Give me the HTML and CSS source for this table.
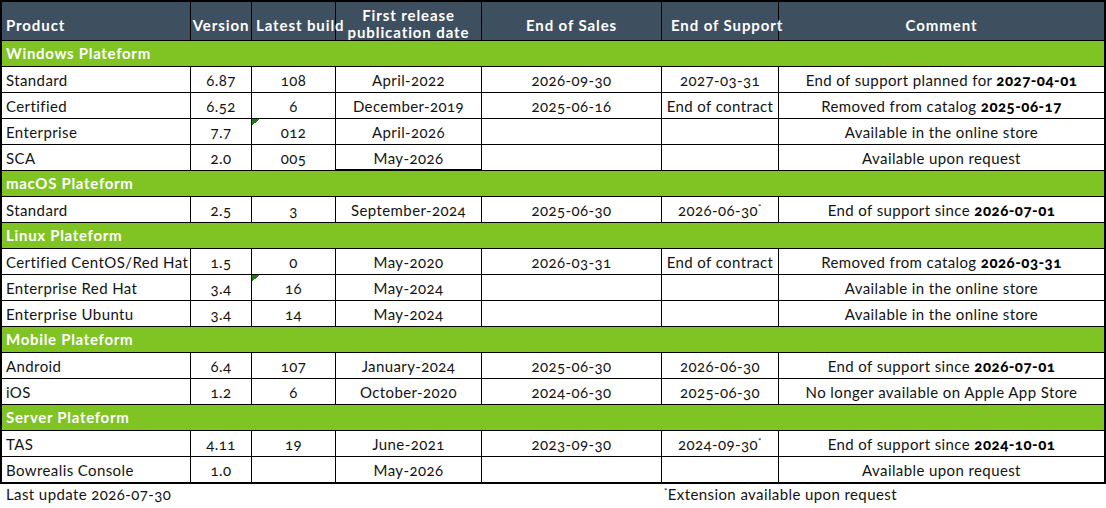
FILE: index.html
```html
<!DOCTYPE html>
<html lang="en">
<head>
<meta charset="utf-8">
<title>Product lifecycle</title>
<link rel="stylesheet" href="styles.css">
</head>
<body>
<table class="sheet">
  <thead>
    <tr class="head">
      <th class="w-product left">Product</th>
      <th class="w-version">Version</th>
      <th class="w-build spill">Latest build</th>
      <th class="w-release two"><div class="two-in">First release<br>publication date</div></th>
      <th class="w-sales">End of Sales</th>
      <th class="w-support spill spill-support">End of Support</th>
      <th class="w-comment">Comment</th>
    </tr>
  </thead>
  <tbody>
    <tr class="group"><td colspan="7">Windows Plateform</td></tr>
    <tr><td>Standard</td><td>6.87</td><td>108</td><td>April-2022</td><td>2026-09-30</td><td>2027-03-31</td><td>End of support planned for <b>2027-04-01</b></td></tr>
    <tr><td>Certified</td><td>6.52</td><td>6</td><td>December-2019</td><td>2025-06-16</td><td>End of contract</td><td>Removed from catalog <b>2025-06-17</b></td></tr>
    <tr><td>Enterprise</td><td>7.7</td><td class="flag">012</td><td>April-2026</td><td></td><td></td><td>Available in the online store</td></tr>
    <tr><td>SCA</td><td>2.0</td><td>005</td><td class="thick-bottom">May-2026</td><td></td><td></td><td>Available upon request</td></tr>
    <tr class="group"><td colspan="7">macOS Plateform</td></tr>
    <tr><td>Standard</td><td>2.5</td><td>3</td><td>September-2024</td><td>2025-06-30</td><td>2026-06-30<sup class="note">*</sup></td><td>End of support since <b>2026-07-01</b></td></tr>
    <tr class="group"><td colspan="7">Linux Plateform</td></tr>
    <tr><td>Certified CentOS/Red Hat</td><td>1.5</td><td>0</td><td>May-2020</td><td>2026-03-31</td><td>End of contract</td><td>Removed from catalog <b>2026-03-31</b></td></tr>
    <tr><td>Enterprise Red Hat</td><td>3.4</td><td class="flag">16</td><td>May-2024</td><td></td><td></td><td>Available in the online store</td></tr>
    <tr><td>Enterprise Ubuntu</td><td>3.4</td><td>14</td><td>May-2024</td><td></td><td></td><td>Available in the online store</td></tr>
    <tr class="group"><td colspan="7">Mobile Plateform</td></tr>
    <tr><td>Android</td><td>6.4</td><td>107</td><td>January-2024</td><td>2025-06-30</td><td>2026-06-30</td><td>End of support since <b>2026-07-01</b></td></tr>
    <tr><td>iOS</td><td>1.2</td><td>6</td><td>October-2020</td><td>2024-06-30</td><td>2025-06-30</td><td>No longer available on Apple App Store</td></tr>
    <tr class="group"><td colspan="7">Server Plateform</td></tr>
    <tr><td>TAS</td><td>4.11</td><td>19</td><td>June-2021</td><td>2023-09-30</td><td>2024-09-30<sup class="note">*</sup></td><td>End of support since <b>2024-10-01</b></td></tr>
    <tr><td>Bowrealis Console</td><td>1.0</td><td></td><td>May-2026</td><td></td><td></td><td>Available upon request</td></tr>
  </tbody>
</table>
<div class="footer">
  <div class="foot-left">Last update 2026-07-30</div>
  <div class="foot-right"><sup class="note">*</sup>Extension available upon request</div>
</div>
</body>
</html>
```

FILE: styles.css
```css
* { box-sizing: border-box; }
html, body { margin: 0; padding: 0; background: #fff; }
body {
  font-family: Lato, "Liberation Sans", sans-serif;
  font-size: 15px;
  letter-spacing: 0.4px;
  color: #141414;
  width: 1106px;
  height: 508px;
  overflow: hidden;
  font-variant-numeric: oldstyle-nums;
}

.sheet {
  border-collapse: separate;
  border-spacing: 0;
  border: 2px solid #000;
  table-layout: fixed;
  width: 1106px;
}

.sheet th,
.sheet td {
  padding: 0 0 3px 0;
  border-right: 1px solid #000;
  border-bottom: 1px solid #000;
  line-height: 18px;
  vertical-align: bottom;
  text-align: center;
  white-space: nowrap;
  font-weight: 400;
}
.sheet th:last-child,
.sheet td:last-child { border-right: none; }

.w-product { width: 189px; }
.w-version { width: 61px; }
.w-build { width: 84px; }
.w-release { width: 146px; }
.w-sales { width: 180px; }
.w-support { width: 117px; }
.w-comment { width: 325px; }

.head { height: 39px; }
.head th {
  background: #3e4f5f;
  color: #fff;
  font-weight: 700;
  letter-spacing: 0.9px;
  padding-bottom: 6px;
  overflow: visible;
}
.head th.left { text-align: left; padding-left: 4px; }
.head th.spill { text-align: left; padding-left: 4px; }
.head th.spill-support { padding-left: 9px; }
.head th.two { padding-bottom: 0; overflow: hidden; }
.two-in { line-height: 16.5px; }

.sheet tbody tr { height: 26px; }
.sheet tbody tr:last-child { height: 25px; }
.sheet tbody tr:last-child td { border-bottom: none; }
.sheet tbody td:first-child { text-align: left; padding-left: 4px; }

.group td {
  background: #80c423;
  color: #fff;
  font-weight: 700;
  letter-spacing: 0.7px;
  text-align: left;
  padding-left: 4px;
  padding-bottom: 4px;
  border-right: none;
}

.flag {
  background-image: linear-gradient(135deg, #1d7a1d 50%, transparent 50%);
  background-size: 7px 7px;
  background-repeat: no-repeat;
  background-position: 0 0;
}

.thick-bottom { border-bottom-width: 2px !important; padding-bottom: 2px !important; }

b { font-weight: 900; color: #000; letter-spacing: 0.5px; }

.note {
  font-size: 8px;
  line-height: 0;
  vertical-align: 6px;
}

.footer {
  display: grid;
  grid-template-columns: 662px 1fr;
  height: 24px;
  padding-top: 1px;
  line-height: 18px;
}
.foot-left { padding-left: 6px; }
.foot-right { padding-left: 2px; }
```
